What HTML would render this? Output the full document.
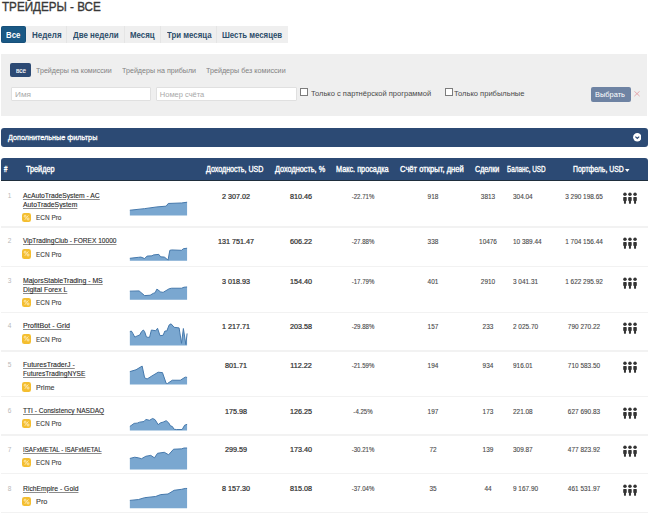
<!DOCTYPE html>
<html><head><meta charset="utf-8">
<style>
html,body{margin:0;padding:0;background:#fff;width:650px;height:515px;overflow:hidden;position:relative;font-family:"Liberation Sans",sans-serif;}
div{box-sizing:border-box;}
.t{position:absolute;white-space:nowrap;line-height:10px;transform-origin:0 0;}
.tab{position:absolute;top:26.4px;height:16.6px;background:#efefef;border-right:1px solid #e5e5e5;}
.tab.act{background:#1a5985;border-radius:1.5px;border:1px solid #17507a;}
.panel{position:absolute;left:1px;top:54px;width:646px;height:61.5px;background:#efefef;}
.pill{position:absolute;left:10.2px;top:62.6px;width:21px;height:14.8px;background:#2c4a74;border-radius:2px;}
.inp{position:absolute;top:86.6px;height:14.3px;background:#fff;border:1px solid #e0e0e0;border-radius:1px;}
.cb{position:absolute;top:88px;width:8px;height:8px;border:1px solid #7c7c7c;background:#fff;}
.btn{position:absolute;left:591.3px;top:86.8px;width:39.4px;height:15px;background:#6e83a3;border-radius:2px;}
.bar{position:absolute;left:1px;width:647.5px;background:#2c4a74;border-radius:3px;}
.rn{left:7.8px;font-size:6.5px;color:#b8b8b8;}
.nm{left:22.5px;font-size:7.2px;color:#2a2a2a;-webkit-text-stroke:0.12px #2a2a2a;text-decoration:underline;text-decoration-color:#8c8c8c;transform:scaleX(0.927);}
.bd{position:absolute;left:22.2px;width:9.2px;height:9.2px;background:#f4be2f;border-radius:2.3px;}
.bd svg{position:absolute;left:0;top:0}
.ac{left:36px;font-size:7.2px;color:#3e3e3e;-webkit-text-stroke:0.12px #3e3e3e;transform:scaleX(0.896);}
.c,.l{font-size:7px;color:#4a4a4a;-webkit-text-stroke:0.12px #4a4a4a;}
.c{width:100px;text-align:center;transform:scaleX(0.92);transform-origin:50% 0;}
.l{transform:scaleX(0.92);}
.c.b{color:#303030;-webkit-text-stroke:0.22px #303030;transform:scaleX(1.03);}
.ic{position:absolute;left:622.8px;}
.ln{position:absolute;left:1px;width:647px;height:1.4px;background:#f2f2f2;}
</style></head><body>
<div class="t" style="left:2px;top:1.9px;font-size:12.6px;color:#383838;-webkit-text-stroke:0.35px #383838;transform:scaleX(0.9252);">ТРЕЙДЕРЫ - ВСЕ</div>
<div class="tab act" style="left:1px;width:25px"></div>
<div class="tab" style="left:26px;width:41px"></div>
<div class="tab" style="left:67px;width:58px"></div>
<div class="tab" style="left:125px;width:36px"></div>
<div class="tab" style="left:161px;width:56px"></div>
<div class="tab" style="left:217px;width:71px;border-right:none"></div>
<div class="t" style="left:6.13px;top:30.2px;font-size:9px;font-weight:bold;color:#fff;transform:scaleX(0.8667);">Все</div><div class="t" style="left:31.81px;top:29.9px;font-size:9px;font-weight:bold;color:#2c4d6a;transform:scaleX(0.8906);">Неделя</div><div class="t" style="left:73px;top:30px;font-size:9px;font-weight:bold;color:#2c4d6a;transform:scaleX(0.8824);">Две недели</div><div class="t" style="left:130.13px;top:30px;font-size:9px;font-weight:bold;color:#2c4d6a;transform:scaleX(0.8741);">Месяц</div><div class="t" style="left:166.5px;top:30px;font-size:9px;font-weight:bold;color:#2c4d6a;transform:scaleX(0.8706);">Три месяца</div><div class="t" style="left:222.13px;top:30px;font-size:9px;font-weight:bold;color:#2c4d6a;transform:scaleX(0.8676);">Шесть месяцев</div>
<div class="panel"></div>
<div class="pill"></div>
<div class="t" style="left:16px;top:65.6px;font-size:7.8px;color:#fff;-webkit-text-stroke:0.15px #fff;transform:scaleX(0.8083);">все</div>
<div class="t" style="left:36.35px;top:65.7px;font-size:7.5px;color:#828282;transform:scaleX(0.9456);">Трейдеры на комиссии</div><div class="t" style="left:121.65px;top:65.6px;font-size:7.5px;color:#828282;transform:scaleX(0.9506);">Трейдеры на прибыли</div><div class="t" style="left:205.55px;top:65.7px;font-size:7.5px;color:#828282;transform:scaleX(0.9549);">Трейдеры без комиссии</div>
<div class="inp" style="left:10.8px;width:140.4px"></div>
<div class="inp" style="left:155.5px;width:141px"></div>
<div class="t" style="left:14.61px;top:89.8px;font-size:7.5px;color:#a8a8a8;transform:scaleX(1.0923);">Имя</div><div class="t" style="left:159.8px;top:89.9px;font-size:7.5px;color:#a8a8a8;transform:scaleX(1.0);">Номер счёта</div>
<div class="cb" style="left:300px"></div>
<div class="cb" style="left:445px"></div>
<div class="t" style="left:310.5px;top:88.9px;font-size:7.5px;color:#4a4a4a;transform:scaleX(1.0042);">Только с партнёрской программой</div><div class="t" style="left:454.19px;top:88.9px;font-size:7.5px;color:#4a4a4a;transform:scaleX(1.0072);">Только прибыльные</div>
<div class="btn"></div>
<div class="t" style="left:595.01px;top:89.8px;font-size:7.5px;color:#fff;transform:scaleX(0.9897);">Выбрать</div>
<svg style="position:absolute;left:633.5px;top:91.2px" width="6" height="5.4" viewBox="0 0 6 5.4"><path d="M0.4 0.3L5.6 5.1M5.6 0.3L0.4 5.1" stroke="#e3a0a6" stroke-width="0.9"/></svg>
<div class="bar" style="top:127.5px;height:19.2px;width:647.3px"></div>
<div class="t" style="left:8.3px;top:133.1px;font-size:7.8px;color:#fff;-webkit-text-stroke:0.3px #fff;transform:scaleX(0.9292);">Дополнительные фильтры</div>
<svg style="position:absolute;left:632.7px;top:133.4px" width="8.6" height="8.6" viewBox="0 0 8.6 8.6"><circle cx="4.3" cy="4.3" r="4.2" fill="#fff"/><path d="M2.4 3.6L4.3 5.4L6.2 3.6" fill="none" stroke="#2c4a74" stroke-width="1.2"/></svg>
<div class="bar" style="top:158px;height:23px;width:647px;border-radius:3px 3px 0 0;border-bottom:1.3px solid #1f2e3c"></div>
<div class="t" style="left:4.3px;top:165px;font-size:8.2px;color:#fff;-webkit-text-stroke:0.35px #fff;transform:scaleX(0.74);">#</div><div class="t" style="left:25.8px;top:165px;font-size:8.2px;color:#fff;-webkit-text-stroke:0.35px #fff;transform:scaleX(0.8875);">Трейдер</div><div class="t" style="left:206px;top:165px;font-size:8.2px;color:#fff;-webkit-text-stroke:0.35px #fff;transform:scaleX(0.8667);">Доходность, USD</div><div class="t" style="left:274.6px;top:165px;font-size:8.2px;color:#fff;-webkit-text-stroke:0.35px #fff;transform:scaleX(0.8911);">Доходность, %</div><div class="t" style="left:336px;top:165px;font-size:8.2px;color:#fff;-webkit-text-stroke:0.35px #fff;transform:scaleX(0.8898);">Макс. просадка</div><div class="t" style="left:400px;top:165px;font-size:8.2px;color:#fff;-webkit-text-stroke:0.35px #fff;transform:scaleX(0.9294);">Счёт открыт, дней</div><div class="t" style="left:474.8px;top:165px;font-size:8.2px;color:#fff;-webkit-text-stroke:0.35px #fff;transform:scaleX(0.8714);">Сделки</div><div class="t" style="left:507.2px;top:165px;font-size:8.2px;color:#fff;-webkit-text-stroke:0.35px #fff;transform:scaleX(0.776);">Баланс, USD</div><div class="t" style="left:572.7px;top:165px;font-size:8.2px;color:#fff;-webkit-text-stroke:0.35px #fff;transform:scaleX(0.8383);">Портфель, USD</div>
<svg style="position:absolute;left:625px;top:169.2px" width="4.5" height="3" viewBox="0 0 4.5 3"><path d="M0 0H4.5L2.25 3Z" fill="#fff"/></svg>
<svg style="position:absolute;left:0;top:0" width="650" height="515" viewBox="0 0 650 515"><polygon points="129.85,215.52 129.85,210.23 144.62,208.63 156.92,206.91 166.15,206.17 168.25,203.46 181.54,202.97 187.08,202.23 187.08,215.52" fill="#7aa7d0"/><polyline points="129.85,210.23 144.62,208.63 156.92,206.91 166.15,206.17 168.25,203.46 181.54,202.97 187.08,202.23" fill="none" stroke="#4679ac" stroke-width="1"/><polygon points="129.85,260.77 129.85,258.31 138.46,257.32 140.92,257.08 144.62,258.55 147.08,256.09 152.00,255.85 153.23,254.98 158.77,254.37 160.62,256.83 164.31,257.08 166.77,258.92 168.00,260.15 169.85,250.31 171.69,249.94 181.54,250.31 183.38,248.71 187.08,248.22 187.08,260.77" fill="#7aa7d0"/><polyline points="129.85,258.31 138.46,257.32 140.92,257.08 144.62,258.55 147.08,256.09 152.00,255.85 153.23,254.98 158.77,254.37 160.62,256.83 164.31,257.08 166.77,258.92 168.00,260.15 169.85,250.31 171.69,249.94 181.54,250.31 183.38,248.71 187.08,248.22" fill="none" stroke="#4679ac" stroke-width="1"/><polygon points="129.85,299.78 129.85,291.17 139.08,290.92 144.62,295.60 150.15,295.23 153.23,293.38 155.08,292.77 156.92,289.08 160.62,291.91 163.08,292.40 169.23,288.71 171.69,288.22 181.54,288.22 184.00,287.23 187.08,286.98 187.08,299.78" fill="#7aa7d0"/><polyline points="129.85,291.17 139.08,290.92 144.62,295.60 150.15,295.23 153.23,293.38 155.08,292.77 156.92,289.08 160.62,291.91 163.08,292.40 169.23,288.71 171.69,288.22 181.54,288.22 184.00,287.23 187.08,286.98" fill="none" stroke="#4679ac" stroke-width="1"/><polygon points="129.85,345.52 129.85,331.62 131.32,331.00 132.92,333.46 134.77,337.15 137.23,335.92 139.69,335.06 141.54,331.62 143.38,330.02 144.62,331.62 146.46,337.15 149.54,337.40 151.38,330.02 155.69,330.75 157.54,328.29 160.00,335.68 163.08,335.31 164.92,331.00 166.77,331.00 169.23,324.85 171.08,323.86 174.15,327.31 179.08,327.92 181.54,343.31 183.38,328.54 185.85,344.54 187.08,333.46 187.08,345.52" fill="#7aa7d0"/><polyline points="129.85,331.62 131.32,331.00 132.92,333.46 134.77,337.15 137.23,335.92 139.69,335.06 141.54,331.62 143.38,330.02 144.62,331.62 146.46,337.15 149.54,337.40 151.38,330.02 155.69,330.75 157.54,328.29 160.00,335.68 163.08,335.31 164.92,331.00 166.77,331.00 169.23,324.85 171.08,323.86 174.15,327.31 179.08,327.92 181.54,343.31 183.38,328.54 185.85,344.54 187.08,333.46" fill="none" stroke="#4679ac" stroke-width="1"/><polygon points="129.85,384.54 129.85,371.62 136.00,369.77 142.15,366.08 144.62,377.77 147.08,379.00 152.00,375.92 158.15,372.23 162.46,372.60 166.15,383.31 167.38,383.55 172.31,380.23 180.31,380.23 185.23,377.15 187.08,377.40 187.08,384.54" fill="#7aa7d0"/><polyline points="129.85,371.62 136.00,369.77 142.15,366.08 144.62,377.77 147.08,379.00 152.00,375.92 158.15,372.23 162.46,372.60 166.15,383.31 167.38,383.55 172.31,380.23 180.31,380.23 185.23,377.15 187.08,377.40" fill="none" stroke="#4679ac" stroke-width="1"/><polygon points="129.85,430.52 129.85,426.46 134.15,423.38 137.23,423.14 139.69,422.15 144.00,421.54 145.85,419.45 149.54,420.31 152.62,418.46 155.08,419.69 158.15,424.62 160.62,422.77 163.08,422.15 166.15,420.68 168.62,422.77 170.46,425.85 172.31,426.46 174.15,429.29 176.62,429.54 182.15,429.54 184.62,425.23 187.08,424.37 187.08,430.52" fill="#7aa7d0"/><polyline points="129.85,426.46 134.15,423.38 137.23,423.14 139.69,422.15 144.00,421.54 145.85,419.45 149.54,420.31 152.62,418.46 155.08,419.69 158.15,424.62 160.62,422.77 163.08,422.15 166.15,420.68 168.62,422.77 170.46,425.85 172.31,426.46 174.15,429.29 176.62,429.54 182.15,429.54 184.62,425.23 187.08,424.37" fill="none" stroke="#4679ac" stroke-width="1"/><polygon points="129.85,469.54 129.85,458.46 134.77,457.23 138.46,457.85 141.54,458.71 145.85,456.25 150.77,455.38 154.46,457.85 157.54,453.29 164.31,452.31 168.62,454.77 173.54,449.23 181.54,448.86 184.00,448.00 187.08,448.00 187.08,469.54" fill="#7aa7d0"/><polyline points="129.85,458.46 134.77,457.23 138.46,457.85 141.54,458.71 145.85,456.25 150.77,455.38 154.46,457.85 157.54,453.29 164.31,452.31 168.62,454.77 173.54,449.23 181.54,448.86 184.00,448.00 187.08,448.00" fill="none" stroke="#4679ac" stroke-width="1"/><polygon points="129.85,508.15 129.85,500.40 138.46,499.54 144.62,497.69 155.69,496.46 160.62,494.62 168.00,494.00 174.15,490.31 181.54,489.32 185.23,488.46 187.08,488.46 187.08,508.15" fill="#7aa7d0"/><polyline points="129.85,500.40 138.46,499.54 144.62,497.69 155.69,496.46 160.62,494.62 168.00,494.00 174.15,490.31 181.54,489.32 185.23,488.46 187.08,488.46" fill="none" stroke="#4679ac" stroke-width="1"/></svg>
<div class="t rn" style="top:190.9px">1</div>
<div class="t nm" style="top:190.9px;transform:scaleX(0.9402)">AcAutoTradeSystem - AC</div>
<div class="t nm" style="top:199.9px;transform:scaleX(0.9491)">AutoTradeSystem</div>
<div class="bd" style="top:213px"><svg width="9.2" height="9.2" viewBox="0 0 9.2 9.2"><g fill="none" stroke="#fde7ae" stroke-width="1"><circle cx="3.1" cy="3.2" r="1"/><circle cx="6.1" cy="6" r="1"/><path d="M6.4 2.4L2.8 6.8"/></g></svg></div>
<div class="t ac" style="top:213.2px;left:35.9px;transform:scaleX(0.8963)">ECN Pro</div>
<div class="t c b" style="top:191.5px;left:186px">2 307.02</div>
<div class="t c b" style="top:191.5px;left:251px">810.46</div>
<div class="t c" style="top:191.5px;left:313.1px;transform:scaleX(0.87)">-22.71%</div>
<div class="t c" style="top:191.5px;left:383px">918</div>
<div class="t c" style="top:191.5px;left:437.9px">3813</div>
<div class="t c" style="top:191.5px;left:534px">3 290 198.65</div>
<div class="t l" style="top:191.5px;left:513.3px">304.04</div>
<div class="ic" style="top:190.6px"><svg width="16" height="13" viewBox="0 0 16 13"><g fill="#333"><circle cx="1.95" cy="2.3" r="1.75"/><path d="M0.20 5.6Q0.20 4.9 0.85 4.9H3.05Q3.70 4.9 3.70 5.6V8.6L2.95 9.2V11.4Q1.95 12 0.95 11.4V9.2L0.20 8.6Z"/><circle cx="6.95" cy="2.3" r="1.75"/><path d="M5.20 5.6Q5.20 4.9 5.85 4.9H8.05Q8.70 4.9 8.70 5.6V8.6L7.95 9.2V11.4Q6.95 12 5.95 11.4V9.2L5.20 8.6Z"/><circle cx="12.05" cy="2.3" r="1.75"/><path d="M10.30 5.6Q10.30 4.9 10.95 4.9H13.15Q13.80 4.9 13.80 5.6V8.6L13.05 9.2V11.4Q12.05 12 11.05 11.4V9.2L10.30 8.6Z"/></g></svg></div>
<div class="ln" style="top:226.2px"></div><div class="t rn" style="top:236.3px">2</div>
<div class="t nm" style="top:236.3px;transform:scaleX(0.9137)">VipTradingClub - FOREX 10000</div>
<div class="bd" style="top:249.4px"><svg width="9.2" height="9.2" viewBox="0 0 9.2 9.2"><g fill="none" stroke="#fde7ae" stroke-width="1"><circle cx="3.1" cy="3.2" r="1"/><circle cx="6.1" cy="6" r="1"/><path d="M6.4 2.4L2.8 6.8"/></g></svg></div>
<div class="t ac" style="top:249.6px;left:35.9px;transform:scaleX(0.8963)">ECN Pro</div>
<div class="t c b" style="top:236.9px;left:186px">131 751.47</div>
<div class="t c b" style="top:236.9px;left:251px">606.22</div>
<div class="t c" style="top:236.9px;left:313.1px;transform:scaleX(0.87)">-27.88%</div>
<div class="t c" style="top:236.9px;left:383px">338</div>
<div class="t c" style="top:236.9px;left:437.9px">10476</div>
<div class="t c" style="top:236.9px;left:534px">1 704 156.44</div>
<div class="t l" style="top:236.9px;left:513.3px">10 389.44</div>
<div class="ic" style="top:236px"><svg width="16" height="13" viewBox="0 0 16 13"><g fill="#333"><circle cx="1.95" cy="2.3" r="1.75"/><path d="M0.20 5.6Q0.20 4.9 0.85 4.9H3.05Q3.70 4.9 3.70 5.6V8.6L2.95 9.2V11.4Q1.95 12 0.95 11.4V9.2L0.20 8.6Z"/><circle cx="6.95" cy="2.3" r="1.75"/><path d="M5.20 5.6Q5.20 4.9 5.85 4.9H8.05Q8.70 4.9 8.70 5.6V8.6L7.95 9.2V11.4Q6.95 12 5.95 11.4V9.2L5.20 8.6Z"/><circle cx="12.05" cy="2.3" r="1.75"/><path d="M10.30 5.6Q10.30 4.9 10.95 4.9H13.15Q13.80 4.9 13.80 5.6V8.6L13.05 9.2V11.4Q12.05 12 11.05 11.4V9.2L10.30 8.6Z"/></g></svg></div>
<div class="ln" style="top:265.7px"></div><div class="t rn" style="top:276.1px">3</div>
<div class="t nm" style="top:276.1px;transform:scaleX(0.9578)">MajorsStableTrading - MS</div>
<div class="t nm" style="top:285.1px;transform:scaleX(0.9565)">Digital Forex L</div>
<div class="bd" style="top:298.2px"><svg width="9.2" height="9.2" viewBox="0 0 9.2 9.2"><g fill="none" stroke="#fde7ae" stroke-width="1"><circle cx="3.1" cy="3.2" r="1"/><circle cx="6.1" cy="6" r="1"/><path d="M6.4 2.4L2.8 6.8"/></g></svg></div>
<div class="t ac" style="top:298.4px;left:35.9px;transform:scaleX(0.8963)">ECN Pro</div>
<div class="t c b" style="top:276.7px;left:186px">3 018.93</div>
<div class="t c b" style="top:276.7px;left:251px">154.40</div>
<div class="t c" style="top:276.7px;left:313.1px;transform:scaleX(0.87)">-17.79%</div>
<div class="t c" style="top:276.7px;left:383px">401</div>
<div class="t c" style="top:276.7px;left:437.9px">2910</div>
<div class="t c" style="top:276.7px;left:534px">1 622 295.92</div>
<div class="t l" style="top:276.7px;left:513.3px">3 041.31</div>
<div class="ic" style="top:275.8px"><svg width="16" height="13" viewBox="0 0 16 13"><g fill="#333"><circle cx="1.95" cy="2.3" r="1.75"/><path d="M0.20 5.6Q0.20 4.9 0.85 4.9H3.05Q3.70 4.9 3.70 5.6V8.6L2.95 9.2V11.4Q1.95 12 0.95 11.4V9.2L0.20 8.6Z"/><circle cx="6.95" cy="2.3" r="1.75"/><path d="M5.20 5.6Q5.20 4.9 5.85 4.9H8.05Q8.70 4.9 8.70 5.6V8.6L7.95 9.2V11.4Q6.95 12 5.95 11.4V9.2L5.20 8.6Z"/><circle cx="12.05" cy="2.3" r="1.75"/><path d="M10.30 5.6Q10.30 4.9 10.95 4.9H13.15Q13.80 4.9 13.80 5.6V8.6L13.05 9.2V11.4Q12.05 12 11.05 11.4V9.2L10.30 8.6Z"/></g></svg></div>
<div class="ln" style="top:311.5px"></div><div class="t rn" style="top:321.3px">4</div>
<div class="t nm" style="top:321.3px;transform:scaleX(0.9875)">ProfitBot - Grid</div>
<div class="bd" style="top:334.4px"><svg width="9.2" height="9.2" viewBox="0 0 9.2 9.2"><g fill="none" stroke="#fde7ae" stroke-width="1"><circle cx="3.1" cy="3.2" r="1"/><circle cx="6.1" cy="6" r="1"/><path d="M6.4 2.4L2.8 6.8"/></g></svg></div>
<div class="t ac" style="top:334.6px;left:35.9px;transform:scaleX(0.8963)">ECN Pro</div>
<div class="t c b" style="top:321.9px;left:186px">1 217.71</div>
<div class="t c b" style="top:321.9px;left:251px">203.58</div>
<div class="t c" style="top:321.9px;left:313.1px;transform:scaleX(0.87)">-29.88%</div>
<div class="t c" style="top:321.9px;left:383px">157</div>
<div class="t c" style="top:321.9px;left:437.9px">233</div>
<div class="t c" style="top:321.9px;left:534px">790 270.22</div>
<div class="t l" style="top:321.9px;left:513.3px">2 025.70</div>
<div class="ic" style="top:321px"><svg width="16" height="13" viewBox="0 0 16 13"><g fill="#333"><circle cx="1.95" cy="2.3" r="1.75"/><path d="M0.20 5.6Q0.20 4.9 0.85 4.9H3.05Q3.70 4.9 3.70 5.6V8.6L2.95 9.2V11.4Q1.95 12 0.95 11.4V9.2L0.20 8.6Z"/><circle cx="6.95" cy="2.3" r="1.75"/><path d="M5.20 5.6Q5.20 4.9 5.85 4.9H8.05Q8.70 4.9 8.70 5.6V8.6L7.95 9.2V11.4Q6.95 12 5.95 11.4V9.2L5.20 8.6Z"/><circle cx="12.05" cy="2.3" r="1.75"/><path d="M10.30 5.6Q10.30 4.9 10.95 4.9H13.15Q13.80 4.9 13.80 5.6V8.6L13.05 9.2V11.4Q12.05 12 11.05 11.4V9.2L10.30 8.6Z"/></g></svg></div>
<div class="ln" style="top:350.4px"></div><div class="t rn" style="top:360.3px">5</div>
<div class="t nm" style="top:360.3px;transform:scaleX(0.9717)">FuturesTraderJ -</div>
<div class="t nm" style="top:369.3px;transform:scaleX(0.9162)">FuturesTradingNYSE</div>
<div class="bd" style="top:382.4px"><svg width="9.2" height="9.2" viewBox="0 0 9.2 9.2"><g fill="none" stroke="#fde7ae" stroke-width="1"><circle cx="3.1" cy="3.2" r="1"/><circle cx="6.1" cy="6" r="1"/><path d="M6.4 2.4L2.8 6.8"/></g></svg></div>
<div class="t ac" style="top:382.6px;left:35.82px;transform:scaleX(0.9824)">Prime</div>
<div class="t c b" style="top:360.9px;left:186px">801.71</div>
<div class="t c b" style="top:360.9px;left:251px">112.22</div>
<div class="t c" style="top:360.9px;left:313.1px;transform:scaleX(0.87)">-21.59%</div>
<div class="t c" style="top:360.9px;left:383px">194</div>
<div class="t c" style="top:360.9px;left:437.9px">934</div>
<div class="t c" style="top:360.9px;left:534px">710 583.50</div>
<div class="t l" style="top:360.9px;left:513.3px">916.01</div>
<div class="ic" style="top:360px"><svg width="16" height="13" viewBox="0 0 16 13"><g fill="#333"><circle cx="1.95" cy="2.3" r="1.75"/><path d="M0.20 5.6Q0.20 4.9 0.85 4.9H3.05Q3.70 4.9 3.70 5.6V8.6L2.95 9.2V11.4Q1.95 12 0.95 11.4V9.2L0.20 8.6Z"/><circle cx="6.95" cy="2.3" r="1.75"/><path d="M5.20 5.6Q5.20 4.9 5.85 4.9H8.05Q8.70 4.9 8.70 5.6V8.6L7.95 9.2V11.4Q6.95 12 5.95 11.4V9.2L5.20 8.6Z"/><circle cx="12.05" cy="2.3" r="1.75"/><path d="M10.30 5.6Q10.30 4.9 10.95 4.9H13.15Q13.80 4.9 13.80 5.6V8.6L13.05 9.2V11.4Q12.05 12 11.05 11.4V9.2L10.30 8.6Z"/></g></svg></div>
<div class="ln" style="top:395.6px"></div><div class="t rn" style="top:406.1px">6</div>
<div class="t nm" style="top:406.1px;transform:scaleX(0.9157)">TTI - Consistency NASDAQ</div>
<div class="bd" style="top:419.2px"><svg width="9.2" height="9.2" viewBox="0 0 9.2 9.2"><g fill="none" stroke="#fde7ae" stroke-width="1"><circle cx="3.1" cy="3.2" r="1"/><circle cx="6.1" cy="6" r="1"/><path d="M6.4 2.4L2.8 6.8"/></g></svg></div>
<div class="t ac" style="top:419.4px;left:35.9px;transform:scaleX(0.8963)">ECN Pro</div>
<div class="t c b" style="top:406.7px;left:186px">175.98</div>
<div class="t c b" style="top:406.7px;left:251px">126.25</div>
<div class="t c" style="top:406.7px;left:313.1px;transform:scaleX(0.87)">-4.25%</div>
<div class="t c" style="top:406.7px;left:383px">197</div>
<div class="t c" style="top:406.7px;left:437.9px">173</div>
<div class="t c" style="top:406.7px;left:534px">627 690.83</div>
<div class="t l" style="top:406.7px;left:513.3px">221.08</div>
<div class="ic" style="top:405.8px"><svg width="16" height="13" viewBox="0 0 16 13"><g fill="#333"><circle cx="1.95" cy="2.3" r="1.75"/><path d="M0.20 5.6Q0.20 4.9 0.85 4.9H3.05Q3.70 4.9 3.70 5.6V8.6L2.95 9.2V11.4Q1.95 12 0.95 11.4V9.2L0.20 8.6Z"/><circle cx="6.95" cy="2.3" r="1.75"/><path d="M5.20 5.6Q5.20 4.9 5.85 4.9H8.05Q8.70 4.9 8.70 5.6V8.6L7.95 9.2V11.4Q6.95 12 5.95 11.4V9.2L5.20 8.6Z"/><circle cx="12.05" cy="2.3" r="1.75"/><path d="M10.30 5.6Q10.30 4.9 10.95 4.9H13.15Q13.80 4.9 13.80 5.6V8.6L13.05 9.2V11.4Q12.05 12 11.05 11.4V9.2L10.30 8.6Z"/></g></svg></div>
<div class="ln" style="top:434.2px"></div><div class="t rn" style="top:444.5px">7</div>
<div class="t nm" style="top:444.5px;transform:scaleX(0.8533)">ISAFxMETAL - ISAFxMETAL</div>
<div class="bd" style="top:457.6px"><svg width="9.2" height="9.2" viewBox="0 0 9.2 9.2"><g fill="none" stroke="#fde7ae" stroke-width="1"><circle cx="3.1" cy="3.2" r="1"/><circle cx="6.1" cy="6" r="1"/><path d="M6.4 2.4L2.8 6.8"/></g></svg></div>
<div class="t ac" style="top:457.8px;left:35.9px;transform:scaleX(0.8963)">ECN Pro</div>
<div class="t c b" style="top:445.1px;left:186px">299.59</div>
<div class="t c b" style="top:445.1px;left:251px">173.40</div>
<div class="t c" style="top:445.1px;left:313.1px;transform:scaleX(0.87)">-30.21%</div>
<div class="t c" style="top:445.1px;left:383px">72</div>
<div class="t c" style="top:445.1px;left:437.9px">139</div>
<div class="t c" style="top:445.1px;left:534px">477 823.92</div>
<div class="t l" style="top:445.1px;left:513.3px">309.87</div>
<div class="ic" style="top:444.2px"><svg width="16" height="13" viewBox="0 0 16 13"><g fill="#333"><circle cx="1.95" cy="2.3" r="1.75"/><path d="M0.20 5.6Q0.20 4.9 0.85 4.9H3.05Q3.70 4.9 3.70 5.6V8.6L2.95 9.2V11.4Q1.95 12 0.95 11.4V9.2L0.20 8.6Z"/><circle cx="6.95" cy="2.3" r="1.75"/><path d="M5.20 5.6Q5.20 4.9 5.85 4.9H8.05Q8.70 4.9 8.70 5.6V8.6L7.95 9.2V11.4Q6.95 12 5.95 11.4V9.2L5.20 8.6Z"/><circle cx="12.05" cy="2.3" r="1.75"/><path d="M10.30 5.6Q10.30 4.9 10.95 4.9H13.15Q13.80 4.9 13.80 5.6V8.6L13.05 9.2V11.4Q12.05 12 11.05 11.4V9.2L10.30 8.6Z"/></g></svg></div>
<div class="ln" style="top:472.9px"></div><div class="t rn" style="top:483.5px">8</div>
<div class="t nm" style="top:483.5px;transform:scaleX(0.9441)">RichEmpire - Gold</div>
<div class="bd" style="top:496.6px"><svg width="9.2" height="9.2" viewBox="0 0 9.2 9.2"><g fill="none" stroke="#fde7ae" stroke-width="1"><circle cx="3.1" cy="3.2" r="1"/><circle cx="6.1" cy="6" r="1"/><path d="M6.4 2.4L2.8 6.8"/></g></svg></div>
<div class="t ac" style="top:496.8px;left:35.78px;transform:scaleX(1.02)">Pro</div>
<div class="t c b" style="top:484.1px;left:186px">8 157.30</div>
<div class="t c b" style="top:484.1px;left:251px">815.08</div>
<div class="t c" style="top:484.1px;left:313.1px;transform:scaleX(0.87)">-37.04%</div>
<div class="t c" style="top:484.1px;left:383px">35</div>
<div class="t c" style="top:484.1px;left:437.9px">44</div>
<div class="t c" style="top:484.1px;left:534px">461 531.97</div>
<div class="t l" style="top:484.1px;left:513.3px">9 167.90</div>
<div class="ic" style="top:483.2px"><svg width="16" height="13" viewBox="0 0 16 13"><g fill="#333"><circle cx="1.95" cy="2.3" r="1.75"/><path d="M0.20 5.6Q0.20 4.9 0.85 4.9H3.05Q3.70 4.9 3.70 5.6V8.6L2.95 9.2V11.4Q1.95 12 0.95 11.4V9.2L0.20 8.6Z"/><circle cx="6.95" cy="2.3" r="1.75"/><path d="M5.20 5.6Q5.20 4.9 5.85 4.9H8.05Q8.70 4.9 8.70 5.6V8.6L7.95 9.2V11.4Q6.95 12 5.95 11.4V9.2L5.20 8.6Z"/><circle cx="12.05" cy="2.3" r="1.75"/><path d="M10.30 5.6Q10.30 4.9 10.95 4.9H13.15Q13.80 4.9 13.80 5.6V8.6L13.05 9.2V11.4Q12.05 12 11.05 11.4V9.2L10.30 8.6Z"/></g></svg></div>
<div class="ln" style="top:511.9px"></div>
</body></html>
